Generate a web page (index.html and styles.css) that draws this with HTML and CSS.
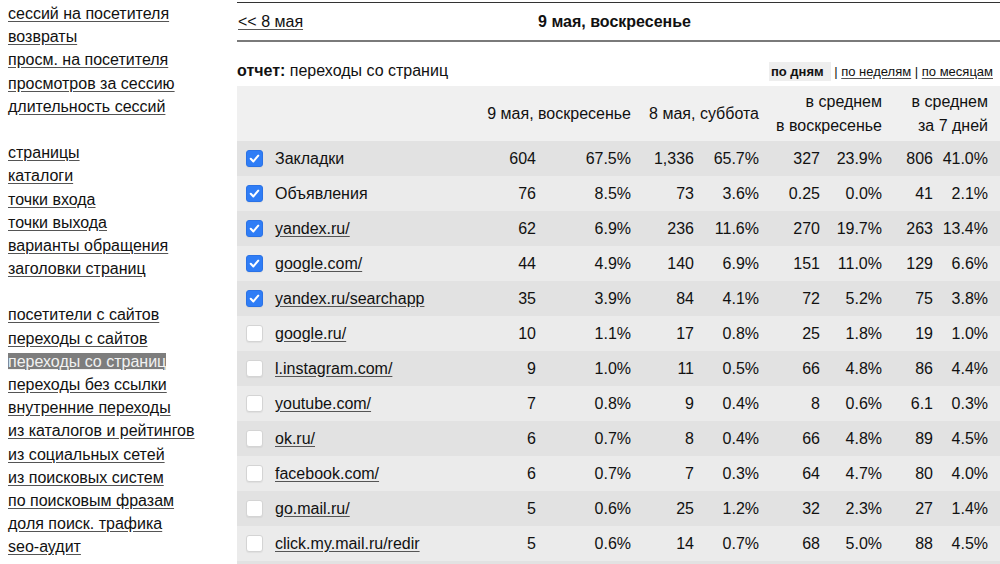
FILE: index.html
```html
<!DOCTYPE html>
<html lang="ru">
<head>
<meta charset="utf-8">
<link rel="stylesheet" href="styles.css">
</head>
<body>
<div class="page">
  <nav class="side">
    <ul class="group">
      <li><a href="#">сессий на посетителя</a></li>
      <li><a href="#">возвраты</a></li>
      <li><a href="#">просм. на посетителя</a></li>
      <li><a href="#">просмотров за сессию</a></li>
      <li><a href="#">длительность сессий</a></li>
    </ul>
    <ul class="group">
      <li><a href="#">страницы</a></li>
      <li><a href="#">каталоги</a></li>
      <li><a href="#">точки входа</a></li>
      <li><a href="#">точки выхода</a></li>
      <li><a href="#">варианты обращения</a></li>
      <li><a href="#">заголовки страниц</a></li>
    </ul>
    <ul class="group">
      <li><a href="#">посетители с сайтов</a></li>
      <li><a href="#">переходы с сайтов</a></li>
      <li><a href="#" class="current">переходы со страниц</a></li>
      <li><a href="#">переходы без ссылки</a></li>
      <li><a href="#">внутренние переходы</a></li>
      <li><a href="#">из каталогов и рейтингов</a></li>
      <li><a href="#">из социальных сетей</a></li>
      <li><a href="#">из поисковых систем</a></li>
      <li><a href="#">по поисковым фразам</a></li>
      <li><a href="#">доля поиск. трафика</a></li>
      <li><a href="#">seo-аудит</a></li>
    </ul>
  </nav>
  <main class="main">
    <div class="datebar">
      <a href="#" class="prev">&lt;&lt; 8 мая</a>
      <span class="title">9 мая, воскресенье</span>
    </div>
    <div class="reportbar">
      <div class="report"><b>отчет:</b> переходы со страниц</div>
      <div class="periods"><span class="active">по дням</span> | <a href="#">по неделям</a> | <a href="#">по месяцам</a></div>
    </div>
    <table class="stats">
      <colgroup>
        <col class="w-cb"><col class="w-name">
        <col class="w-n1"><col class="w-p1">
        <col class="w-n2"><col class="w-p2">
        <col class="w-n3"><col class="w-p3">
        <col class="w-n4"><col class="w-p4">
        <col class="w-pad">
      </colgroup>
      <thead>
        <tr>
          <th></th><th></th>
          <th colspan="2">9 мая, воскресенье</th>
          <th colspan="2">8 мая, суббота</th>
          <th colspan="2">в среднем<br>в воскресенье</th>
          <th colspan="2">в среднем<br>за 7 дней</th>
          <th></th>
        </tr>
      </thead>
      <tbody>
        <tr><td><span class="cb on"><svg viewBox="0 0 16 16"><path d="M4 8.3l2.8 2.8L12 5"/></svg></span></td><td class="name">Закладки</td><td>604</td><td>67.5%</td><td>1,336</td><td>65.7%</td><td>327</td><td>23.9%</td><td>806</td><td>41.0%</td><td></td></tr>
        <tr><td><span class="cb on"><svg viewBox="0 0 16 16"><path d="M4 8.3l2.8 2.8L12 5"/></svg></span></td><td class="name">Объявления</td><td>76</td><td>8.5%</td><td>73</td><td>3.6%</td><td>0.25</td><td>0.0%</td><td>41</td><td>2.1%</td><td></td></tr>
        <tr><td><span class="cb on"><svg viewBox="0 0 16 16"><path d="M4 8.3l2.8 2.8L12 5"/></svg></span></td><td class="name"><a href="#">yandex.ru/</a></td><td>62</td><td>6.9%</td><td>236</td><td>11.6%</td><td>270</td><td>19.7%</td><td>263</td><td>13.4%</td><td></td></tr>
        <tr><td><span class="cb on"><svg viewBox="0 0 16 16"><path d="M4 8.3l2.8 2.8L12 5"/></svg></span></td><td class="name"><a href="#">google.com/</a></td><td>44</td><td>4.9%</td><td>140</td><td>6.9%</td><td>151</td><td>11.0%</td><td>129</td><td>6.6%</td><td></td></tr>
        <tr><td><span class="cb on"><svg viewBox="0 0 16 16"><path d="M4 8.3l2.8 2.8L12 5"/></svg></span></td><td class="name"><a href="#">yandex.ru/searchapp</a></td><td>35</td><td>3.9%</td><td>84</td><td>4.1%</td><td>72</td><td>5.2%</td><td>75</td><td>3.8%</td><td></td></tr>
        <tr><td><span class="cb"></span></td><td class="name"><a href="#">google.ru/</a></td><td>10</td><td>1.1%</td><td>17</td><td>0.8%</td><td>25</td><td>1.8%</td><td>19</td><td>1.0%</td><td></td></tr>
        <tr><td><span class="cb"></span></td><td class="name"><a href="#">l.instagram.com/</a></td><td>9</td><td>1.0%</td><td>11</td><td>0.5%</td><td>66</td><td>4.8%</td><td>86</td><td>4.4%</td><td></td></tr>
        <tr><td><span class="cb"></span></td><td class="name"><a href="#">youtube.com/</a></td><td>7</td><td>0.8%</td><td>9</td><td>0.4%</td><td>8</td><td>0.6%</td><td>6.1</td><td>0.3%</td><td></td></tr>
        <tr><td><span class="cb"></span></td><td class="name"><a href="#">ok.ru/</a></td><td>6</td><td>0.7%</td><td>8</td><td>0.4%</td><td>66</td><td>4.8%</td><td>89</td><td>4.5%</td><td></td></tr>
        <tr><td><span class="cb"></span></td><td class="name"><a href="#">facebook.com/</a></td><td>6</td><td>0.7%</td><td>7</td><td>0.3%</td><td>64</td><td>4.7%</td><td>80</td><td>4.0%</td><td></td></tr>
        <tr><td><span class="cb"></span></td><td class="name"><a href="#">go.mail.ru/</a></td><td>5</td><td>0.6%</td><td>25</td><td>1.2%</td><td>32</td><td>2.3%</td><td>27</td><td>1.4%</td><td></td></tr>
        <tr><td><span class="cb"></span></td><td class="name"><a href="#">click.my.mail.ru/redir</a></td><td>5</td><td>0.6%</td><td>14</td><td>0.7%</td><td>68</td><td>5.0%</td><td>88</td><td>4.5%</td><td></td></tr>
        <tr class="filler"><td colspan="11"></td></tr>
      </tbody>
    </table>
  </main>
</div>
</body>
</html>
```

FILE: styles.css
```css
html, body {
  margin: 0;
  padding: 0;
  background: #fff;
}
body {
  font-family: "Liberation Sans", Arial, sans-serif;
  font-size: 16px;
  color: #111;
  width: 1000px;
  height: 564px;
  overflow: hidden;
}
a {
  color: #111;
  text-decoration: underline;
  text-decoration-color: #555;
  text-underline-offset: 2px;
}
.page {
  display: flex;
  align-items: flex-start;
}
.side {
  width: 237px;
  flex: 0 0 237px;
  padding-top: 2px;
}
.group {
  list-style: none;
  margin: 0 0 23.2px 0;
  padding: 0 0 0 8px;
}
.group li {
  line-height: 23.2px;
  height: 23.2px;
  white-space: nowrap;
}
.current {
  background: #7d7d7d;
  color: #f2f2f2;
  text-decoration-color: #f2f2f2;
}
.main {
  flex: 1 1 auto;
  width: 763px;
}
.datebar {
  margin-top: 2px;
  border-top: 1px solid #333;
  border-bottom: 2px solid #7a7a7a;
  height: 37px;
  display: flex;
  align-items: center;
}
.prev {
  padding-left: 1px;
}
.title {
  flex: 1;
  text-align: center;
  font-weight: bold;
  padding-right: 74px;
}
.reportbar {
  display: flex;
  justify-content: space-between;
  align-items: center;
  padding: 20px 7px 6px 0;
  height: 18px;
}
.report {
  font-size: 16px;
}
.periods {
  font-size: 13px;
  color: #111;
}
.periods .active {
  font-weight: bold;
  background: #eeeeee;
  padding: 2px 7px 2px 2px;
}
.stats {
  width: 763px;
  table-layout: fixed;
  border-collapse: collapse;
  border-spacing: 0;
}
.w-cb { width: 31px; }
.w-name { width: 202px; }
.w-n1 { width: 66px; }
.w-p1 { width: 95px; }
.w-n2 { width: 63px; }
.w-p2 { width: 65px; }
.w-n3 { width: 61px; }
.w-p3 { width: 62px; }
.w-n4 { width: 51px; }
.w-p4 { width: 55px; }
.w-pad { width: 12px; }
.stats thead tr {
  background: #f0f0f0;
  height: 55px;
}
.stats th {
  font-weight: normal;
  text-align: right;
  line-height: 24px;
  padding: 0;
  vertical-align: middle;
  white-space: nowrap;
}
.stats tbody tr {
  height: 35px;
  background: #e2e2e2;
}
.stats tbody tr:nth-child(even) {
  background: #ebebeb;
}
.stats td {
  padding: 0;
  text-align: right;
  vertical-align: middle;
  white-space: nowrap;
  line-height: 18px;
}
.stats td.name {
  text-align: left;
  padding-left: 7px;
}
.cb {
  display: block;
  box-sizing: border-box;
  width: 17px;
  height: 17px;
  margin-left: 9px;
  border-radius: 3px;
  background: #fff;
  border: 1px solid #d4d4d4;
  box-shadow: 0 1px 1px rgba(0,0,0,0.05);
}
.cb.on {
  background: #2f7df6;
  border-color: #2a72e6;
}
.cb svg {
  display: block;
  width: 15px;
  height: 15px;
}
.cb svg path {
  fill: none;
  stroke: #fff;
  stroke-width: 2.2;
  stroke-linecap: round;
  stroke-linejoin: round;
}
```
